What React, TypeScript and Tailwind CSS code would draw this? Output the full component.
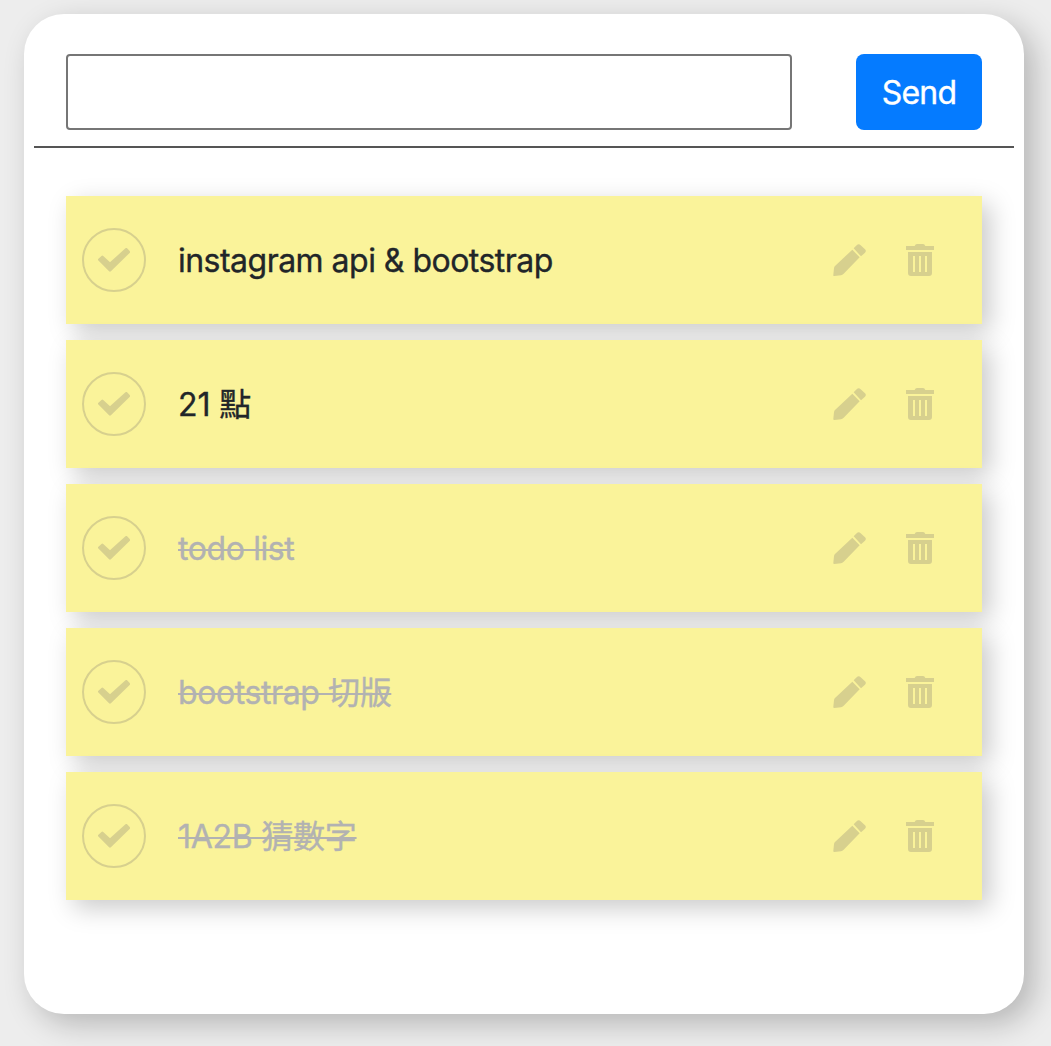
type Todo = { text: string; done: boolean; spacing: string };

const todos: Todo[] = [
  { text: "instagram api & bootstrap", done: false, spacing: "tracking-[-0.52px]" },
  { text: "21 點", done: false, spacing: "tracking-[-0.1px]" },
  { text: "todo list", done: true, spacing: "tracking-[-0.4px]" },
  { text: "bootstrap 切版", done: true, spacing: "tracking-[-0.4px]" },
  { text: "1A2B 猜數字", done: true, spacing: "tracking-[-0.25px]" },
];

function CheckIcon() {
  return (
    <svg className="h-6 w-8" viewBox="0 0 96 72" fill="currentColor" stroke="currentColor" strokeWidth="8" strokeLinejoin="round">
      <path d="M4 35 L13 27 L36 48 L85 4 L92 12 L36 67 Z" />
    </svg>
  );
}

function PencilIcon() {
  return (
    <svg className="h-8 w-[33px]" viewBox="0 0 99 96" fill="currentColor">
      <path d="M58 17 L80 40 L32 89 Q28 93 24 94 L4 96 Q0 96 1 92 L3 73 Q3 69 6 66 Z" />
      <path d="M62 13 L71 4 Q77 -2 83 4 L96 16 Q101 21 96 26 L84 37 Z" />
    </svg>
  );
}

function TrashIcon() {
  return (
    <svg className="h-8 w-7" viewBox="0 0 84 96" fill="currentColor" fillRule="evenodd">
      <path d="M0 6 H26 Q28 0 33 0 H51 Q56 0 58 6 H84 V18 H0 Z" />
      <path d="M6 24 H78 V87 Q78 96 69 96 H15 Q6 96 6 87 Z M21 36 V84 H27 V36 Z M39 36 V84 H45 V36 Z M57 36 V84 H63 V36 Z" />
    </svg>
  );
}

export default function App() {
  return (
    <main className="h-[1046px] overflow-hidden bg-[#ededed] pl-6 pt-3.5 font-['Inter','Noto_Sans_CJK_TC',sans-serif] text-[32px] leading-[48px] text-[#212529] [-webkit-text-stroke:0.35px_currentColor]">
      <section className="h-[1000px] w-[1000px] rounded-[40px] bg-white px-2.5 pt-10 shadow-[10px_10px_30px_rgba(0,0,0,0.23)]">
        <form className="flex h-[94px] items-start justify-between border-b-2 border-[#555] px-8" onSubmit={(e) => e.preventDefault()}>
          <input aria-label="New todo" className="h-[76px] w-[726px] rounded-[4px] border-2 border-[#767676] bg-white px-3 outline-none" />
          <button className="h-[76px] w-[126px] rounded-lg bg-[#057bff] pt-0.5 tracking-[-0.8px] text-white">Send</button>
        </form>
        <ul className="mt-12 flex flex-col gap-4 px-8">
          {todos.map((todo) => (
            <li key={todo.text} className="flex h-32 items-center bg-[#faf39a] pl-4 pr-12 shadow-[8px_8px_24px_rgba(0,0,0,0.21)]">
              <button aria-label="Complete" className="flex size-16 items-center justify-center rounded-full border-2 border-[#d7d08e] text-[#d7d08e]">
                <CheckIcon />
              </button>
              <span className={`ml-8 flex-1 whitespace-nowrap pt-0.5 ${todo.spacing} ${todo.done ? "text-[#b2b2b2] line-through decoration-2" : ""}`}>
                {todo.text}
              </span>
              <div className="flex items-center gap-10 text-[#d7d08e]">
                <button aria-label="Edit"><PencilIcon /></button>
                <button aria-label="Delete"><TrashIcon /></button>
              </div>
            </li>
          ))}
        </ul>
      </section>
    </main>
  );
}
